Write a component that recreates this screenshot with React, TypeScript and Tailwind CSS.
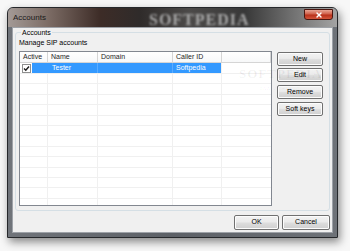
import { X } from 'lucide-react'

const columns = [
  { label: 'Active', width: 'w-[28px]' },
  { label: 'Name', width: 'w-[50px]' },
  { label: 'Domain', width: 'w-[75px]' },
  { label: 'Caller ID', width: 'w-[49px]' },
  { label: '', width: 'flex-1' },
]

const emptyRows = Array.from({ length: 13 })

function Button({ label, className }: { label: string; className: string }) {
  return (
    <button
      className={`flex items-center justify-center rounded-[2px] border border-[#707070] bg-[linear-gradient(#f3f3f3,#ebebeb_45%,#dddddd_55%,#cfcfcf)] text-[7px] text-black shadow-[inset_0_0_0_1px_#fcfcfc] ${className}`}
    >
      {label}
    </button>
  )
}

function Checkbox() {
  return (
    <div className="flex h-[9px] w-[9px] items-center justify-center border border-[#8e8f8f] bg-white">
      <svg width="7" height="7" viewBox="0 0 7 7">
        <path d="M1 3.5 L2.8 5.3 L6 1.5" fill="none" stroke="#1c1c1c" strokeWidth="1.4" />
      </svg>
    </div>
  )
}

export default function App() {
  return (
    <div className="h-[251px] w-[350px] overflow-hidden bg-[#f7f7f7] pl-[7px] pt-[7px] font-['Liberation_Sans',Arial,sans-serif]">
      <div className="flex h-[231px] w-[331px] flex-col rounded-t-[6px] border border-[#26282b] bg-[linear-gradient(90deg,#70747a,#5c6066_50%,#6e7278)] shadow-[2px_4px_8px_rgba(0,0,0,0.45)]">
        {/* title bar */}
        <div className="relative flex h-[19px] shrink-0 items-start overflow-hidden rounded-t-[5px] bg-[linear-gradient(90deg,#a39a96,#7d6d66_12%,#3d2c27_28%,#2f2b2a_40%,#4c4a49_55%,#383838_72%,#6f6f6f_86%,#a3a3a3)]">
          <span className="absolute left-[141px] top-[4px] select-none font-['Liberation_Serif',serif] text-[16px] font-bold leading-none tracking-[1px] text-[#a9a9a9] blur-[0.8px]">
            SOFTPEDIA
          </span>
          <span className="relative ml-[5px] mt-[6px] text-[8px] leading-none text-[#1a1a1a]">Accounts</span>
          <div className="relative ml-auto mr-[4px] mt-[1px] flex h-[11px] w-[29px] items-center justify-center rounded-b-[3px] border border-[#4a1610] bg-[linear-gradient(#e7a595,#d0604a_45%,#b8301a_55%,#d2553a)]">
            <X className="h-[8px] w-[8px] text-white" strokeWidth={4} />
          </div>
        </div>

        {/* client area */}
        <div className="mx-[4px] mb-[4px] flex flex-1 flex-col border border-[#9ea2a8] bg-[#f0f0f0] px-[2px] pb-[2px]">
          <fieldset className="relative flex h-[183px] flex-col rounded-[3px] border border-[#d5dfe5] px-[3px] pb-[3px]">
            <legend className="ml-[2px] px-[1px] text-[7px] leading-[9px] text-black">Accounts</legend>
            <span className="mt-[1px] text-[7px] leading-[9px] text-black">Manage SIP accounts</span>

            <div className="mt-[4px] flex flex-1 gap-[5px]">
              {/* list view */}
              <div className="flex h-[155px] w-[253px] flex-col overflow-hidden border border-[#828790] bg-white">
                <div className="flex h-[11px] shrink-0 border-b border-[#d5d5d5] bg-[linear-gradient(#ffffff,#f7f8f9)]">
                  {columns.map((c) => (
                    <div
                      key={c.label || 'blank'}
                      className={`${c.width} border-r border-[#d5d5d5] pl-[3px] text-[7px] leading-[10px] text-[#1e1e1e]`}
                    >
                      {c.label}
                    </div>
                  ))}
                </div>

                <div className="flex h-[11px] shrink-0 border-b border-[#f0f0f0] text-[7px] leading-[10px] text-white">
                  <div className="flex w-[28px] items-center border-r border-[#3399ff] pl-[2px]">
                    <Checkbox />
                    <div className="ml-[1px] h-full flex-1 bg-[#3399ff]" />
                  </div>
                  <div className="w-[50px] border-r border-[#5aacff] bg-[#3399ff] pl-[4px]">Tester</div>
                  <div className="w-[75px] border-r border-[#5aacff] bg-[#3399ff]" />
                  <div className="w-[49px] border-r border-[#f0f0f0] bg-[#3399ff] pl-[3px]">Softpedia</div>
                  <div className="flex-1" />
                </div>

                {emptyRows.map((_, i) => (
                  <div key={i} className="flex h-[10.4px] shrink-0 border-b border-[#f0f0f0]">
                    <div className="w-[28px] border-r border-[#f0f0f0]" />
                    <div className="w-[50px] border-r border-[#f0f0f0]" />
                    <div className="w-[75px] border-r border-[#f0f0f0]" />
                    <div className="w-[49px] border-r border-[#f0f0f0]" />
                    <div className="flex-1" />
                  </div>
                ))}
              </div>

              {/* side buttons */}
              <div className="flex w-[46px] flex-col pt-[1px]">
                <Button label="New" className="h-[14px] w-[46px]" />
                <Button label="Edit" className="mt-[2px] h-[14px] w-[46px]" />
                <Button label="Remove" className="mt-[3px] h-[14px] w-[46px]" />
                <Button label="Soft keys" className="mt-[3px] h-[14px] w-[46px]" />
              </div>
            </div>

            <div className="pointer-events-none absolute left-[223px] top-[30px] flex flex-col items-center text-[rgba(0,0,0,0.06)]">
              <span className="font-['Liberation_Serif',serif] text-[13px] font-bold leading-none tracking-[1px]">SOFTPEDIA</span>
              <span className="mt-[6px] text-[5px] leading-none">www.softpedia.com</span>
            </div>
          </fieldset>

          <div className="mt-auto flex justify-end gap-[3px]">
            <Button label="OK" className="h-[15px] w-[45px]" />
            <Button label="Cancel" className="h-[15px] w-[48px]" />
          </div>
        </div>
      </div>
    </div>
  )
}
